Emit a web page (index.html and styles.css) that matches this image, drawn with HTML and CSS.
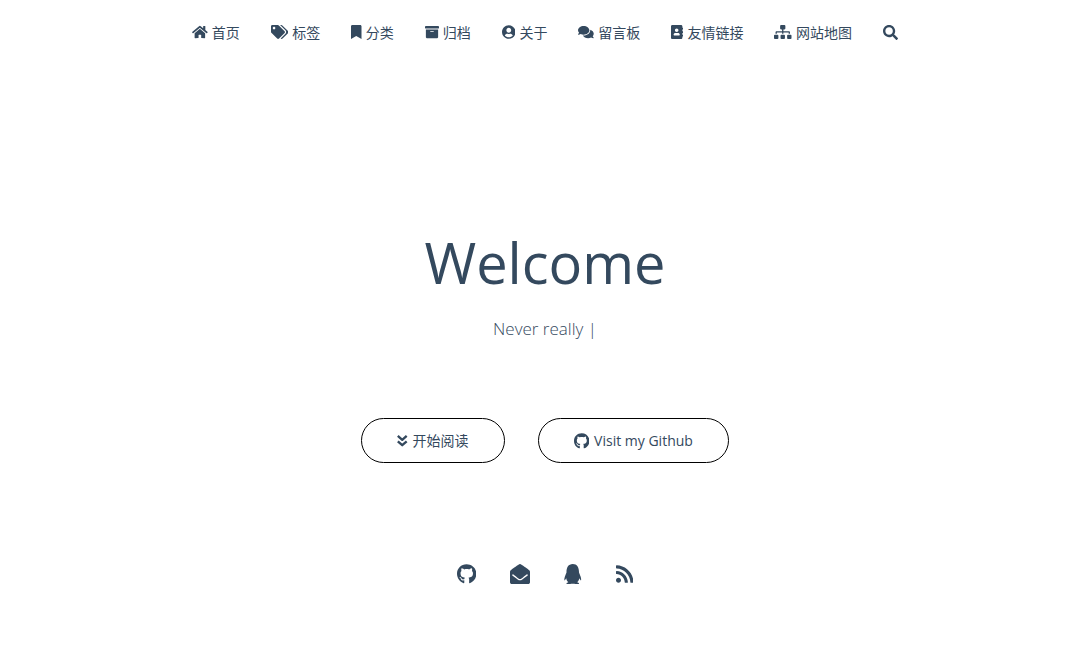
FILE: index.html
```html
<!DOCTYPE html>
<html lang="zh-CN">
<head>
<meta charset="utf-8">
<meta name="viewport" content="width=device-width, initial-scale=1">
<title>Welcome</title>
<link rel="stylesheet" href="styles.css">
</head>
<body>
<nav class="nav" aria-label="主导航">
  <a class="nav-link" href="#home"><svg class="icon" viewBox="0 0 576 512" aria-hidden="true"><path d="M280.37 148.26L96 300.11V464a16 16 0 0 0 16 16l112.06-.29a16 16 0 0 0 15.92-16V368a16 16 0 0 1 16-16h64a16 16 0 0 1 16 16v95.64a16 16 0 0 0 16 16.05L464 480a16 16 0 0 0 16-16V300L295.67 148.26a12.19 12.19 0 0 0-15.3 0zM571.6 251.47L488 182.56V44.05a12 12 0 0 0-12-12h-56a12 12 0 0 0-12 12v72.61L318.47 43a48 48 0 0 0-61 0L4.34 251.47a12 12 0 0 0-1.6 16.9l25.5 31A12 12 0 0 0 45.15 301l235.22-193.74a12.19 12.19 0 0 1 15.3 0L530.9 301a12 12 0 0 0 16.9-1.6l25.5-31a12 12 0 0 0-1.7-16.93z"/></svg>首页</a>
  <a class="nav-link" href="#tags"><svg class="icon" viewBox="0 0 640 512" aria-hidden="true"><path d="M497.941 225.941L286.059 14.059A48 48 0 0 0 252.118 0H48C21.49 0 0 21.49 0 48v204.118a48 48 0 0 0 14.059 33.941l211.882 211.882c18.744 18.745 49.136 18.746 67.882 0l204.118-204.118c18.745-18.745 18.745-49.137 0-67.882zM112 160c-26.51 0-48-21.49-48-48s21.49-48 48-48 48 21.49 48 48-21.49 48-48 48zm513.941 133.823L421.823 497.941c-18.745 18.745-49.137 18.745-67.882 0l-.36-.36L527.64 323.522c16.999-16.999 26.36-39.6 26.36-63.64s-9.362-46.641-26.36-63.64L331.397 0h48.721a48 48 0 0 1 33.941 14.059l211.882 211.882c18.745 18.745 18.745 49.137 0 67.882z"/></svg>标签</a>
  <a class="nav-link" href="#categories"><svg class="icon" viewBox="0 0 384 512" aria-hidden="true"><path d="M0 512V48C0 21.49 21.49 0 48 0h288c26.51 0 48 21.49 48 48v464L192 400 0 512z"/></svg>分类</a>
  <a class="nav-link" href="#archives"><svg class="icon" viewBox="0 0 512 512" aria-hidden="true"><path d="M32 448c0 17.7 14.3 32 32 32h384c17.7 0 32-14.3 32-32V160H32v288zm160-212c0-6.600 5.400-12 12-12h104c6.600 0 12 5.400 12 12v8c0 6.600-5.400 12-12 12H204c-6.600 0-12-5.400-12-12v-8zM480 32H32C14.300 32 0 46.300 0 64v48c0 8.800 7.200 16 16 16h480c8.800 0 16-7.200 16-16V64c0-17.700-14.300-32-32-32z"/></svg>归档</a>
  <a class="nav-link" href="#about"><svg class="icon" viewBox="0 0 496 512" aria-hidden="true"><path d="M248 8C111 8 0 119 0 256s111 248 248 248 248-111 248-248S385 8 248 8zm0 96c48.600 0 88 39.400 88 88s-39.400 88-88 88-88-39.400-88-88 39.400-88 88-88zm0 344c-58.700 0-111.300-26.600-146.500-68.200 18.800-35.400 55.600-59.800 98.500-59.800 2.400 0 4.800.4 7.100 1.100 13 4.200 26.600 6.900 40.900 6.900 14.300 0 28-2.700 40.900-6.900 2.300-.7 4.700-1.100 7.100-1.100 42.900 0 79.700 24.400 98.500 59.800C359.300 421.400 306.700 448 248 448z"/></svg>关于</a>
  <a class="nav-link" href="#messages"><svg class="icon" viewBox="0 0 576 512" aria-hidden="true"><path d="M416 192c0-88.400-93.100-160-208-160S0 103.600 0 192c0 34.300 14.100 65.900 38 92-13.400 30.200-35.500 54.200-35.800 54.500-2.200 2.300-2.800 5.700-1.500 8.700S4.800 352 8 352c36.600 0 66.900-12.300 88.700-25 32.200 15.700 70.300 25 111.300 25 114.900 0 208-71.600 208-160zm122 220c23.900-26 38-57.700 38-92 0-66.900-53.500-124.200-129.300-148.100.9 6.600 1.300 13.300 1.300 20.100 0 105.900-107.700 192-240 192-10.800 0-21.300-.8-31.700-1.900C207.800 439.600 281.800 480 368 480c41 0 79.100-9.200 111.300-25 21.800 12.700 52.100 25 88.700 25 3.200 0 6.100-1.900 7.300-4.800 1.300-2.900.7-6.300-1.500-8.700-.3-.3-22.400-24.200-35.800-54.500z"/></svg>留言板</a>
  <a class="nav-link" href="#links"><svg class="icon" viewBox="0 0 448 512" aria-hidden="true"><path d="M436 160c6.600 0 12-5.400 12-12v-40c0-6.600-5.400-12-12-12h-20V48c0-26.500-21.500-48-48-48H48C21.500 0 0 21.500 0 48v416c0 26.500 21.500 48 48 48h320c26.500 0 48-21.500 48-48v-48h20c6.600 0 12-5.400 12-12v-40c0-6.600-5.400-12-12-12h-20v-64h20c6.600 0 12-5.400 12-12v-40c0-6.600-5.400-12-12-12h-20v-64h20zm-228-32c35.300 0 64 28.700 64 64s-28.700 64-64 64-64-28.700-64-64 28.700-64 64-64zm112 236.800c0 10.600-10 19.200-22.400 19.200H118.400C106 384 96 375.400 96 364.800v-19.200c0-31.800 30.100-57.600 67.200-57.600h5c12.300 5.100 25.700 8 39.800 8s27.600-2.900 39.800-8h5c37.100 0 67.200 25.800 67.200 57.600v19.200z"/></svg>友情链接</a>
  <a class="nav-link" href="#sitemap"><svg class="icon" viewBox="0 0 640 512" aria-hidden="true"><path d="M128 352H32c-17.670 0-32 14.330-32 32v96c0 17.670 14.330 32 32 32h96c17.670 0 32-14.330 32-32v-96c0-17.670-14.330-32-32-32zm-24-80h192v48h48v-48h192v48h48v-57.590c0-21.170-17.230-38.410-38.410-38.410H344v-64h40c17.670 0 32-14.330 32-32V32c0-17.670-14.330-32-32-32H256c-17.670 0-32 14.330-32 32v96c0 17.670 14.330 32 32 32h40v64H94.410C73.230 224 56 241.230 56 262.410V320h48v-48zm264 80h-96c-17.670 0-32 14.330-32 32v96c0 17.670 14.330 32 32 32h96c17.670 0 32-14.330 32-32v-96c0-17.670-14.330-32-32-32zm240 0h-96c-17.670 0-32 14.330-32 32v96c0 17.670 14.330 32 32 32h96c17.670 0 32-14.330 32-32v-96c0-17.670-14.330-32-32-32z"/></svg>网站地图</a>
  <button class="nav-link search" type="button" aria-label="搜索"><svg class="icon" viewBox="0 0 512 512" aria-hidden="true"><path d="M505 442.700L405.300 343c-4.500-4.500-10.600-7-17-7H372c27.600-35.300 44-79.700 44-128C416 93.100 322.900 0 208 0S0 93.100 0 208s93.100 208 208 208c48.300 0 92.700-16.400 128-44v16.300c0 6.400 2.500 12.500 7 17l99.700 99.700c9.400 9.400 24.600 9.400 33.900 0l28.300-28.300c9.400-9.400 9.400-24.600.1-34zM208 336c-70.700 0-128-57.200-128-128 0-70.700 57.200-128 128-128 70.700 0 128 57.200 128 128 0 70.700-57.200 128-128 128z"/></svg></button>
</nav>
<main class="hero">
  <h1 class="title">Welcome</h1>
  <p class="subtitle">Never really |</p>
  <div class="actions">
    <a class="pill" href="#read"><svg class="icon" viewBox="0 0 384 512" aria-hidden="true"><path fill="none" stroke="currentColor" stroke-width="86" stroke-linejoin="round" d="M30 70l162 142L354 70M30 268l162 142 162-142"/></svg>开始阅读</a>
    <a class="pill" href="#github"><svg class="icon icon-pill" viewBox="0 0 496 512" aria-hidden="true"><use href="#mark"/></svg>Visit my Github</a>
  </div>
  <div class="social">
    <a class="social-link" href="#github" aria-label="Github"><svg class="icon" viewBox="0 0 496 512" aria-hidden="true"><path id="mark" d="M165.900 397.400c0 2-2.300 3.600-5.200 3.600-3.300.3-5.600-1.300-5.600-3.600 0-2 2.300-3.600 5.200-3.600 3-.3 5.600 1.300 5.600 3.600zm-31.100-4.500c-.7 2 1.300 4.300 4.300 4.900 2.600 1 5.600 0 6.200-2s-1.300-4.300-4.300-5.200c-2.600-.7-5.500.3-6.200 2.300zm44.200-1.700c-2.900.7-4.900 2.600-4.600 4.900.3 2 2.900 3.300 5.900 2.600 2.900-.7 4.900-2.600 4.600-4.600-.3-1.900-3-3.200-5.900-2.900zM244.800 8C106.100 8 0 113.300 0 252c0 110.900 69.800 205.800 169.500 239.200 12.800 2.300 17.300-5.600 17.300-12.100 0-6.200-.3-40.400-.3-61.400 0 0-70 15-84.700-29.800 0 0-11.400-29.100-27.800-36.600 0 0-22.900-15.700 1.600-15.400 0 0 24.900 2 38.600 25.800 21.900 38.600 58.600 27.500 72.900 20.900 2.300-16 8.800-27.100 16-33.700-55.900-6.200-112.300-14.300-112.300-110.500 0-27.500 7.600-41.300 23.600-58.900-2.600-6.500-11.100-33.300 2.600-67.900 20.900-6.500 69 27 69 27 20-5.600 41.500-8.500 62.800-8.500s42.800 2.900 62.800 8.500c0 0 48.100-33.600 69-27 13.700 34.700 5.200 61.400 2.600 67.900 16 17.700 25.800 31.500 25.800 58.900 0 96.500-58.900 104.200-114.800 110.500 9.200 7.900 17 22.900 17 46.400 0 33.700-.3 75.400-.3 83.600 0 6.500 4.600 14.400 17.300 12.100C428.200 457.800 496 362.900 496 252 496 113.300 383.500 8 244.800 8z"/></svg></a>
    <a class="social-link" href="#mail" aria-label="Email"><svg class="icon" viewBox="0 0 512 512" aria-hidden="true"><path d="M512 464c0 26.510-21.490 48-48 48H48c-26.510 0-48-21.490-48-48V200.724a48 48 0 0 1 18.387-37.776c24.913-19.529 45.501-35.365 164.200-121.511C199.412 29.170 232.797-.347 256 .003c23.198-.354 56.596 29.172 73.413 41.433 118.687 86.137 139.303 101.995 164.200 121.512A48 48 0 0 1 512 200.724V464zm-65.666-196.605c-2.563-3.728-7.700-4.595-11.339-1.907-22.845 16.873-55.462 40.705-105.582 77.079-16.825 12.266-50.210 41.781-73.413 41.430-23.211.344-56.559-29.143-73.413-41.430-50.114-36.370-82.734-60.204-105.582-77.079-3.639-2.688-8.776-1.821-11.339 1.907l-9.072 13.196a7.998 7.998 0 0 0 1.839 10.967c22.887 16.899 55.454 40.690 105.303 76.868 20.274 14.781 56.524 47.813 92.264 47.573 35.724.242 71.961-32.771 92.263-47.573 49.850-36.179 82.418-59.970 105.303-76.868a7.998 7.998 0 0 0 1.839-10.967l-9.071-13.196z"/></svg></a>
    <a class="social-link" href="#qq" aria-label="QQ"><svg class="icon" viewBox="0 0 448 512" aria-hidden="true"><path d="M433.754 420.445c-11.526 1.393-44.860-52.741-44.860-52.741 0 31.345-16.136 72.247-51.051 101.786 16.842 5.192 54.843 19.167 45.803 34.421-7.316 12.343-125.510 7.881-159.632 4.037-34.122 3.844-152.316 8.306-159.632-4.037-9.045-15.250 28.918-29.214 45.783-34.415-34.920-29.539-51.059-70.445-51.059-101.792 0 0-33.334 54.134-44.859 52.741-5.370-.65-12.424-29.644 9.347-99.704 10.261-33.024 21.995-60.478 40.144-105.779C60.683 98.063 108.982.006 224 0c113.737.006 163.156 96.133 160.264 214.963 18.118 45.223 29.912 72.850 40.144 105.778 21.768 70.060 14.716 99.053 9.346 99.704z"/></svg></a>
    <a class="social-link" href="#rss" aria-label="RSS"><svg class="icon" viewBox="0 0 448 512" aria-hidden="true"><path d="M128.081 415.959c0 35.369-28.672 64.041-64.041 64.041S0 451.328 0 415.959s28.672-64.041 64.041-64.041 64.040 28.673 64.040 64.041zm175.660 47.250c-8.354-154.600-132.185-278.587-286.950-286.950C7.656 175.765 0 183.105 0 192.253v48.069c0 8.415 6.490 15.472 14.887 16.018 111.832 7.284 201.473 96.702 208.772 208.772.547 8.397 7.604 14.887 16.018 14.887h48.069c9.149.001 16.489-7.655 15.995-16.790zm144.249.288C439.596 229.677 251.465 40.445 16.503 32.010 7.473 31.686 0 38.981 0 48.016v48.068c0 8.625 6.835 15.645 15.453 15.999 191.179 7.839 344.627 161.316 352.465 352.465.353 8.618 7.373 15.453 15.999 15.453h48.068c9.034-.001 16.329-7.474 16.005-16.504z"/></svg></a>
  </div>
</main>
</body>
</html>
```

FILE: styles.css
```css
* {
  box-sizing: border-box;
}

body {
  margin: 0;
  background: #fff;
  color: #34495e;
  font-family: "Open Sans", "Noto Sans CJK SC", sans-serif;
  font-size: 14px;
}

a {
  color: inherit;
  text-decoration: none;
}

.icon {
  display: block;
  flex: none;
  height: 1em;
  fill: currentColor;
}

.nav {
  display: flex;
  flex-wrap: wrap;
  justify-content: center;
  gap: 0 31px;
  padding: 21px 16px;
}

.nav-link {
  display: flex;
  align-items: center;
  gap: 4px;
  line-height: 22px;
  font-family: "Noto Sans CJK SC", sans-serif;
  font-weight: 400;
}

.search {
  padding: 0;
  border: 0;
  background: none;
  color: inherit;
  font-size: 15px;
  cursor: pointer;
}

.hero {
  display: flex;
  flex-direction: column;
  align-items: center;
  padding: 156px 16px 80px;
}

.title {
  margin: 0;
  font-size: 56px;
  font-weight: 400;
  line-height: 84px;
}

.subtitle {
  margin: 12px 0 0;
  font-size: 17px;
  font-weight: 300;
  line-height: 26px;
}

.actions {
  display: flex;
  flex-wrap: wrap;
  justify-content: center;
  gap: 16px 33px;
  margin-top: 76px;
}

.pill {
  display: flex;
  align-items: center;
  gap: 5px;
  padding: 11px 35px;
  border: 1px solid #000;
  border-radius: 24px;
  line-height: 21px;
}

.icon-pill {
  height: 16px;
}

.social {
  display: flex;
  gap: 34px;
  margin-top: 101px;
  font-size: 20px;
}
```
